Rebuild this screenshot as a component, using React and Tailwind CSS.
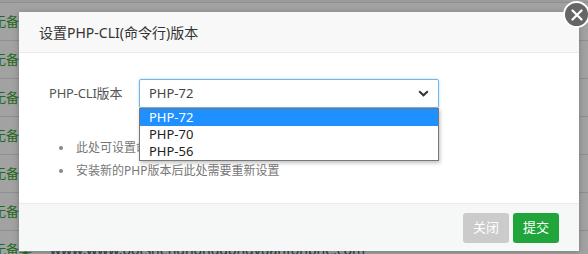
import React from "react";

const rows = [0, 1, 2, 3, 4, 5, 6];
const options = ["PHP-72", "PHP-70", "PHP-56"];

const App = () => {
  return (
    <div
      className="relative w-[588px] h-[254px] overflow-hidden bg-[#a2a2a2]"
      style={{ fontFamily: '"Noto Sans", "Noto Sans CJK SC", sans-serif' }}>
      {/* page behind the overlay */}
      <div className="pt-[2px] bg-[#9b9b9b]">
        {rows.map((i) => (
          <div
            key={i}
            className="h-[38px] flex items-center border-t border-[#8f8f8f] bg-[#a2a2a2]">
            <span className="ml-[-7px] text-[13px] text-[#1f6b1f] whitespace-nowrap">
              无备案
            </span>
            {i === 6 && (
              <span className="ml-[18px] text-[14px] text-[#2a3a4a] whitespace-nowrap">
                www.www.ootshenghongdongyuanfohbhe.com
              </span>
            )}
          </div>
        ))}
      </div>

      {/* modal */}
      <div className="absolute left-[19px] top-[12px] w-[560px] bg-white shadow-[0_1px_6px_rgba(0,0,0,0.25)]">
        <div className="h-[41px] flex items-center px-[20px] bg-[#f8f8f8] border-b border-[#eaeaea] text-[14px] text-[#333]">
          设置PHP-CLI(命令行)版本
        </div>

        <div className="relative h-[150px] pt-[26px]">
          <div className="flex items-center">
            <div className="w-[120px] pl-[30px] text-[13px] text-[#555] tracking-[-0.2px]">PHP-CLI版本</div>
            <div className="relative">
              <div className="w-[300px] h-[29px] flex items-center justify-between pl-[9px] pr-[9px] border border-[#74b4e8] rounded-[2px] shadow-[0_0_3px_rgba(102,175,233,0.5)] text-[13px] text-[#444]">
                <span>PHP-72</span>
                <svg width="11" height="7" viewBox="0 0 11 7" fill="none">
                  <path d="M1.2 1.2 5.5 5.3 9.8 1.2" stroke="#333" strokeWidth="2" />
                </svg>
              </div>
              {/* open dropdown list */}
              <div className="absolute left-0 top-[29px] z-10 w-[300px] bg-white border border-[#777] shadow-[1px_2px_4px_rgba(0,0,0,0.25)] text-[13px]">
                {options.map((o, idx) => (
                  <div
                    key={o}
                    className={`h-[17px] flex items-center pl-[9px] ${
                      idx === 0 ? "bg-[#1e90ff] text-white" : "text-[#222]"
                    }`}>
                    {o}
                  </div>
                ))}
              </div>
            </div>
          </div>

          <ul className="mt-[28px] pl-[40px] text-[12px] text-[#777] leading-[23px]">
            <li className="flex items-center">
              <span className="w-[4px] h-[4px] rounded-full bg-[#888] mr-[13px]" />
              此处可设置命令行运行php时使用的PHP版本
            </li>
            <li className="flex items-center">
              <span className="w-[4px] h-[4px] rounded-full bg-[#888] mr-[13px]" />
              安装新的PHP版本后此处需要重新设置
            </li>
          </ul>
        </div>

        <div className="h-[48px] flex items-center justify-end gap-[4px] pr-[20px] bg-[#f6f8f8] border-t border-[#eaeaea]">
          <button className="w-[46px] h-[30px] rounded-[3px] bg-[#cbcbcb] text-white text-[13px]">
            关闭
          </button>
          <button className="w-[46px] h-[30px] rounded-[3px] bg-[#20a53a] text-white text-[13px]">
            提交
          </button>
        </div>
      </div>

      {/* close circle */}
      <div className="absolute left-[563px] top-[1px] w-[27px] h-[27px] rounded-full bg-[#666] border-2 border-white flex items-center justify-center">
        <svg width="12" height="12" viewBox="0 0 12 12">
          <path d="M1.5 1.5l9 9M10.5 1.5l-9 9" stroke="white" strokeWidth="2.2" strokeLinecap="round" />
        </svg>
      </div>
    </div>
  );
};

export default App;
